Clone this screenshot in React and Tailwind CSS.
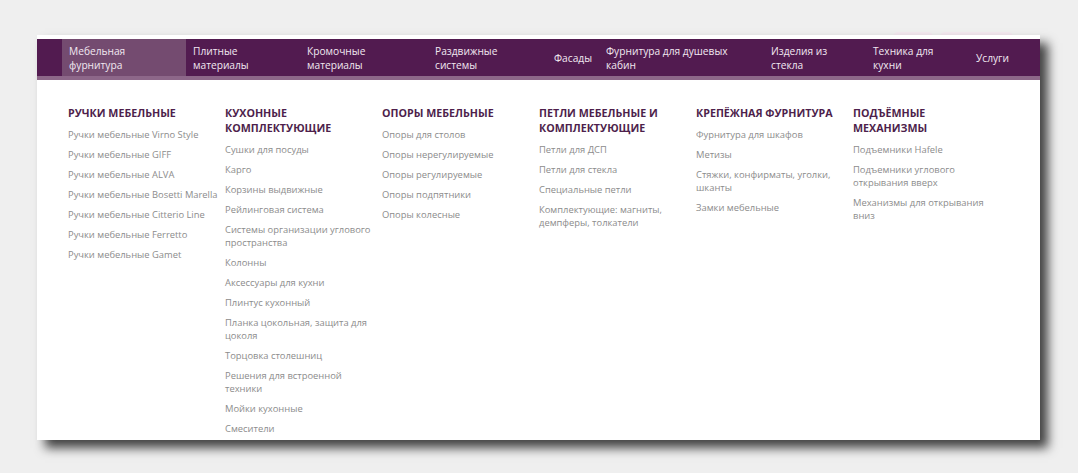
import React from "react";

// верхнее меню
const navItems = [
  { label: ["Мебельная", "фурнитура"], w: "w-[124px]", active: true },
  { label: ["Плитные", "материалы"], w: "w-[114px]" },
  { label: ["Кромочные", "материалы"], w: "w-[128px]" },
  { label: ["Раздвижные", "системы"], w: "w-[119px]" },
  { label: ["Фасады"], w: "w-[52px]" },
  { label: ["Фурнитура для душевых", "кабин"], w: "w-[165px]" },
  { label: ["Изделия из", "стекла"], w: "w-[102px]" },
  { label: ["Техника для", "кухни"], w: "w-[103px]" },
  { label: ["Услуги"], w: "w-[71px]" },
];

// колонки выпадающего меню
const columns = [
  {
    title: "Ручки мебельные",
    links: [
      "Ручки мебельные Virno Style",
      "Ручки мебельные GIFF",
      "Ручки мебельные ALVA",
      "Ручки мебельные Bosetti Marella",
      "Ручки мебельные Citterio Line",
      "Ручки мебельные Ferretto",
      "Ручки мебельные Gamet",
    ],
  },
  {
    title: "Кухонные комплектующие",
    links: [
      "Сушки для посуды",
      "Карго",
      "Корзины выдвижные",
      "Рейлинговая система",
      "Системы организации углового пространства",
      "Колонны",
      "Аксессуары для кухни",
      "Плинтус кухонный",
      "Планка цокольная, защита для цоколя",
      "Торцовка столешниц",
      "Решения для встроенной техники",
      "Мойки кухонные",
      "Смесители",
    ],
  },
  {
    title: "Опоры мебельные",
    links: [
      "Опоры для столов",
      "Опоры нерегулируемые",
      "Опоры регулируемые",
      "Опоры подпятники",
      "Опоры колесные",
    ],
  },
  {
    title: "Петли мебельные и комплектующие",
    links: [
      "Петли для ДСП",
      "Петли для стекла",
      "Специальные петли",
      "Комплектующие: магниты, демпферы, толкатели",
    ],
  },
  {
    title: "Крепёжная фурнитура",
    links: [
      "Фурнитура для шкафов",
      "Метизы",
      "Стяжки, конфирматы, уголки, шканты",
      "Замки мебельные",
    ],
  },
  {
    title: "Подъёмные механизмы",
    links: [
      "Подъемники Hafele",
      "Подъемники углового открывания вверх",
      "Механизмы для открывания вниз",
    ],
  },
];

export default function App() {
  return (
    <div
      className="min-h-[473px] bg-[#efefef] pt-[35px] pl-[37px] relative overflow-hidden"
      style={{ fontFamily: '"Open Sans", "Liberation Sans", sans-serif' }}
    >
      {/* кусочки кнопок, выглядывающие из-под панели */}
      <div className="absolute top-[32px] left-[893px] w-[40px] h-[10px] rounded-full bg-[#f3e8ef]" />
      <div className="absolute top-[32px] left-[940px] w-[73px] h-[10px] rounded-full bg-[#f3e8ef]" />

      <div className="relative z-10 w-[1003px] h-[405px] bg-white pt-[4px] shadow-[8px_8px_10px_rgba(0,0,0,0.72)]">
        {/* навигация */}
        <div className="flex h-[41px] bg-[#521b50] border-b-[4px] border-[#8d6789] pl-[25px] text-[10.2px] leading-[14px] text-[#f1e8f0]">
          {navItems.map((item, i) => (
            <div
              key={i}
              className={`${item.w} shrink-0 flex items-center pl-[7px] ${item.active ? "bg-[#744b70]" : ""}`}
            >
              <div className="whitespace-nowrap">
                {item.label.map((l, j) => (
                  <div key={j}>{l}</div>
                ))}
              </div>
            </div>
          ))}
        </div>

        {/* выпадающее меню */}
        <div className="flex pl-[31px] pt-[26px]">
          {columns.map((col, i) => (
            <div key={i} className="w-[157px] shrink-0">
              <div className="w-[142px] text-[10.7px] leading-[15px] font-bold uppercase text-[#4e1f4c]">
                {col.title}
              </div>
              <div className="w-[153px] mt-[7px] flex flex-col gap-[7px] text-[9.4px] leading-[13px] text-[#8c8c8c]">
                {col.links.map((l, j) => (
                  <div key={j}>{l}</div>
                ))}
              </div>
            </div>
          ))}
        </div>
      </div>
    </div>
  );
}
